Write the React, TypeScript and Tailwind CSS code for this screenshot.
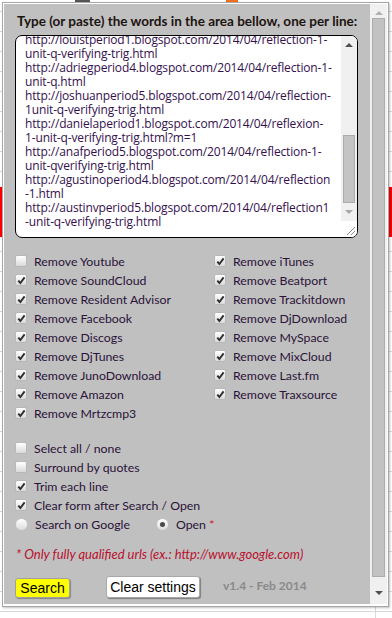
import React from 'react'

const urlLines = [
  'http://louistperiod1.blogspot.com/2014/04/reflection-1-',
  'unit-q-verifying-trig.html',
  'http://adriegperiod4.blogspot.com/2014/04/reflection-1-',
  'unit-q.html',
  'http://joshuanperiod5.blogspot.com/2014/04/reflection-',
  '1unit-q-verifying-trig.html',
  'http://danielaperiod1.blogspot.com/2014/04/reflexion-',
  '1-unit-q-verifying-trig.html?m=1',
  'http://anafperiod5.blogspot.com/2014/04/reflection-1-',
  'unit-qverifying-trig.html',
  'http://agustinoperiod4.blogspot.com/2014/04/reflection',
  '-1.html',
  'http://austinvperiod5.blogspot.com/2014/04/reflection1',
  '-unit-q-verifying-trig.html',
]

const leftItems: [string, boolean][] = [
  ['Remove Youtube', false],
  ['Remove SoundCloud', true],
  ['Remove Resident Advisor', true],
  ['Remove Facebook', true],
  ['Remove Discogs', true],
  ['Remove DjTunes', true],
  ['Remove JunoDownload', true],
  ['Remove Amazon', true],
  ['Remove Mrtzcmp3', true],
]

const rightItems: [string, boolean][] = [
  ['Remove iTunes', true],
  ['Remove Beatport', true],
  ['Remove Trackitdown', true],
  ['Remove DjDownload', true],
  ['Remove MySpace', true],
  ['Remove MixCloud', true],
  ['Remove Last.fm', true],
  ['Remove Traxsource', true],
]

const options: [string, boolean][] = [
  ['Select all / none', false],
  ['Surround by quotes', false],
  ['Trim each line', true],
  ['Clear form after Search / Open', true],
]

function Check({ checked }: { checked: boolean }) {
  return (
    <span className="mb-[3px] flex h-[12px] w-[12px] shrink-0 items-center justify-center rounded-[2px] border border-[#b8b8b8] bg-linear-to-b from-white to-[#dadada]">
      {checked && (
        <svg width="9" height="9" viewBox="0 0 9 9">
          <path d="M1.3 4.6 L3.4 7 L7.6 1.4" fill="none" stroke="#2e2e2e" strokeWidth="1.9" />
        </svg>
      )}
    </span>
  )
}

function Radio({ checked }: { checked: boolean }) {
  return (
    <span className="mb-[2px] flex h-[13px] w-[13px] shrink-0 items-center justify-center rounded-full border border-[#c4c4c4] bg-linear-to-b from-white to-[#dcdcdc]">
      {checked && <span className="h-[5px] w-[5px] rounded-full bg-[#4a4a4a]" />}
    </span>
  )
}

function Row({ label, checked }: { label: string; checked: boolean }) {
  return (
    <div className="flex h-[19px] items-center gap-[7px]">
      <Check checked={checked} />
      <span className="whitespace-nowrap">{label}</span>
    </div>
  )
}

function Arrow({ up, color }: { up?: boolean; color: string }) {
  return (
    <svg width="8" height="5" viewBox="0 0 8 5">
      <path d={up ? 'M0 5 L4 1 L8 5 Z' : 'M0 0 L8 0 L4 4 Z'} fill={color} />
    </svg>
  )
}

export default function App() {
  return (
    <div className="relative h-[618px] w-[392px] overflow-hidden bg-white bg-[repeating-linear-gradient(to_bottom,transparent_0px,transparent_11px,#d9d9d9_11px,#d9d9d9_12px,transparent_12px,transparent_20px)] pl-[2px] pt-[2px] font-['Lato',sans-serif] text-[12.3px] text-[#2a1238]">
      {/* sheet behind the popup */}
      <div className="absolute left-0 top-[187px] h-[50px] w-full bg-[#ff0000]" />
      <div className="absolute left-[75px] top-0 h-[3px] w-[15px] bg-[#555]" />
      <div className="absolute left-[226px] top-0 h-[3px] w-[12px] bg-[#f07020]" />
      <div className="absolute bottom-0 left-[375px] h-[12px] w-px bg-[#d9d9d9]" />

      <div className="relative flex h-[605px] w-[387px] border border-[#a6a6a6] bg-white p-px pb-[2px] shadow-[1px_1px_2px_rgba(0,0,0,0.25)]">
        <div className="flex w-[366px] flex-col bg-[#c0c0c0] pl-[11px] pt-[9px]">
          <div className="ml-[2px] h-[17px] whitespace-nowrap text-[13.5px] font-bold leading-[17px] text-[#1c1410]">
            Type (or paste) the words in the area bellow, one per line:
          </div>

          <div className="mt-[5px] flex h-[203px] w-[343px] overflow-hidden rounded-[7px] border border-black bg-white">
            <div className="-mt-[3px] flex-1 overflow-hidden pl-[9px] font-['Open_Sans',sans-serif] text-[12px] leading-[14px] tracking-[-0.15px] text-[#34104e]">
              {urlLines.map((l, i) => (
                <div key={i} className="whitespace-nowrap">
                  {l}
                </div>
              ))}
            </div>
            <div className="flex w-[16px] flex-col bg-[#f0f0f0]">
              <div className="flex h-[17px] items-center justify-center">
                <Arrow up color="#505050" />
              </div>
              <div className="flex-1">
                <div className="mx-[2px] mt-[82px] h-[68px] border border-[#acacac] bg-[#c4c4c4]" />
              </div>
              <div className="flex h-[17px] items-center justify-center">
                <Arrow color="#a8a8a8" />
              </div>
              <div className="flex h-[16px] items-end justify-end bg-white p-[2px]">
                <svg width="9" height="9" viewBox="0 0 9 9">
                  <path d="M1 9 L9 1 M5 9 L9 5" stroke="#8a8a8a" strokeWidth="1" />
                </svg>
              </div>
            </div>
          </div>

          <div className="mt-[15px] grid grid-cols-[199px_1fr]">
            <div className="flex flex-col">
              {leftItems.map(([l, c]) => (
                <Row key={l} label={l} checked={c} />
              ))}
            </div>
            <div className="flex flex-col">
              {rightItems.map(([l, c]) => (
                <Row key={l} label={l} checked={c} />
              ))}
            </div>
          </div>

          <div className="mt-[16px] flex flex-col">
            {options.map(([l, c]) => (
              <Row key={l} label={l} checked={c} />
            ))}
            <div className="flex h-[19px] items-center">
              <Radio checked={false} />
              <span className="ml-[7px] w-[121px] whitespace-nowrap">Search on Google</span>
              <Radio checked />
              <span className="ml-[7px] whitespace-nowrap">
                Open <span className="text-[#d0103a]">*</span>
              </span>
            </div>
          </div>

          <div className="ml-[1px] mt-[11px] h-[16px] whitespace-nowrap text-[13px] italic leading-[16px] text-[#b8102e]">
            * Only fully qualified urls (ex.: http://www.google.com)
          </div>

          <div className="mt-[14px] flex items-start">
            <button className="mt-[2px] h-[20px] w-[55px] rounded-[3px] border border-[#a0a0a0] bg-[#ffff00] font-['Liberation_Sans',sans-serif] text-[14px] leading-[18px] text-black shadow-[1px_1px_1px_rgba(0,0,0,0.3)]">
              Search
            </button>
            <button className="ml-[36px] h-[22px] w-[94px] rounded-[3px] border border-[#a8a8a8] bg-white font-['Liberation_Sans',sans-serif] text-[14px] leading-[20px] text-black shadow-[1px_1px_1px_rgba(0,0,0,0.35)]">
              Clear settings
            </button>
            <span className="ml-[23px] whitespace-nowrap pt-[1px] text-[12px] font-bold text-[#8a8a8a]">
              v1.4 - Feb 2014
            </span>
          </div>
        </div>

        <div className="flex w-[17px] flex-col bg-[#f0f0f0]">
          <div className="flex h-[14px] items-center justify-center pt-[2px]">
            <Arrow up color="#b0b0b0" />
          </div>
          <div className="mx-[2px] h-[559px] border border-[#acacac] bg-[#c2c2c2]" />
          <div className="flex flex-1 items-center justify-center pt-[6px]">
            <Arrow color="#505050" />
          </div>
        </div>
      </div>
    </div>
  )
}
